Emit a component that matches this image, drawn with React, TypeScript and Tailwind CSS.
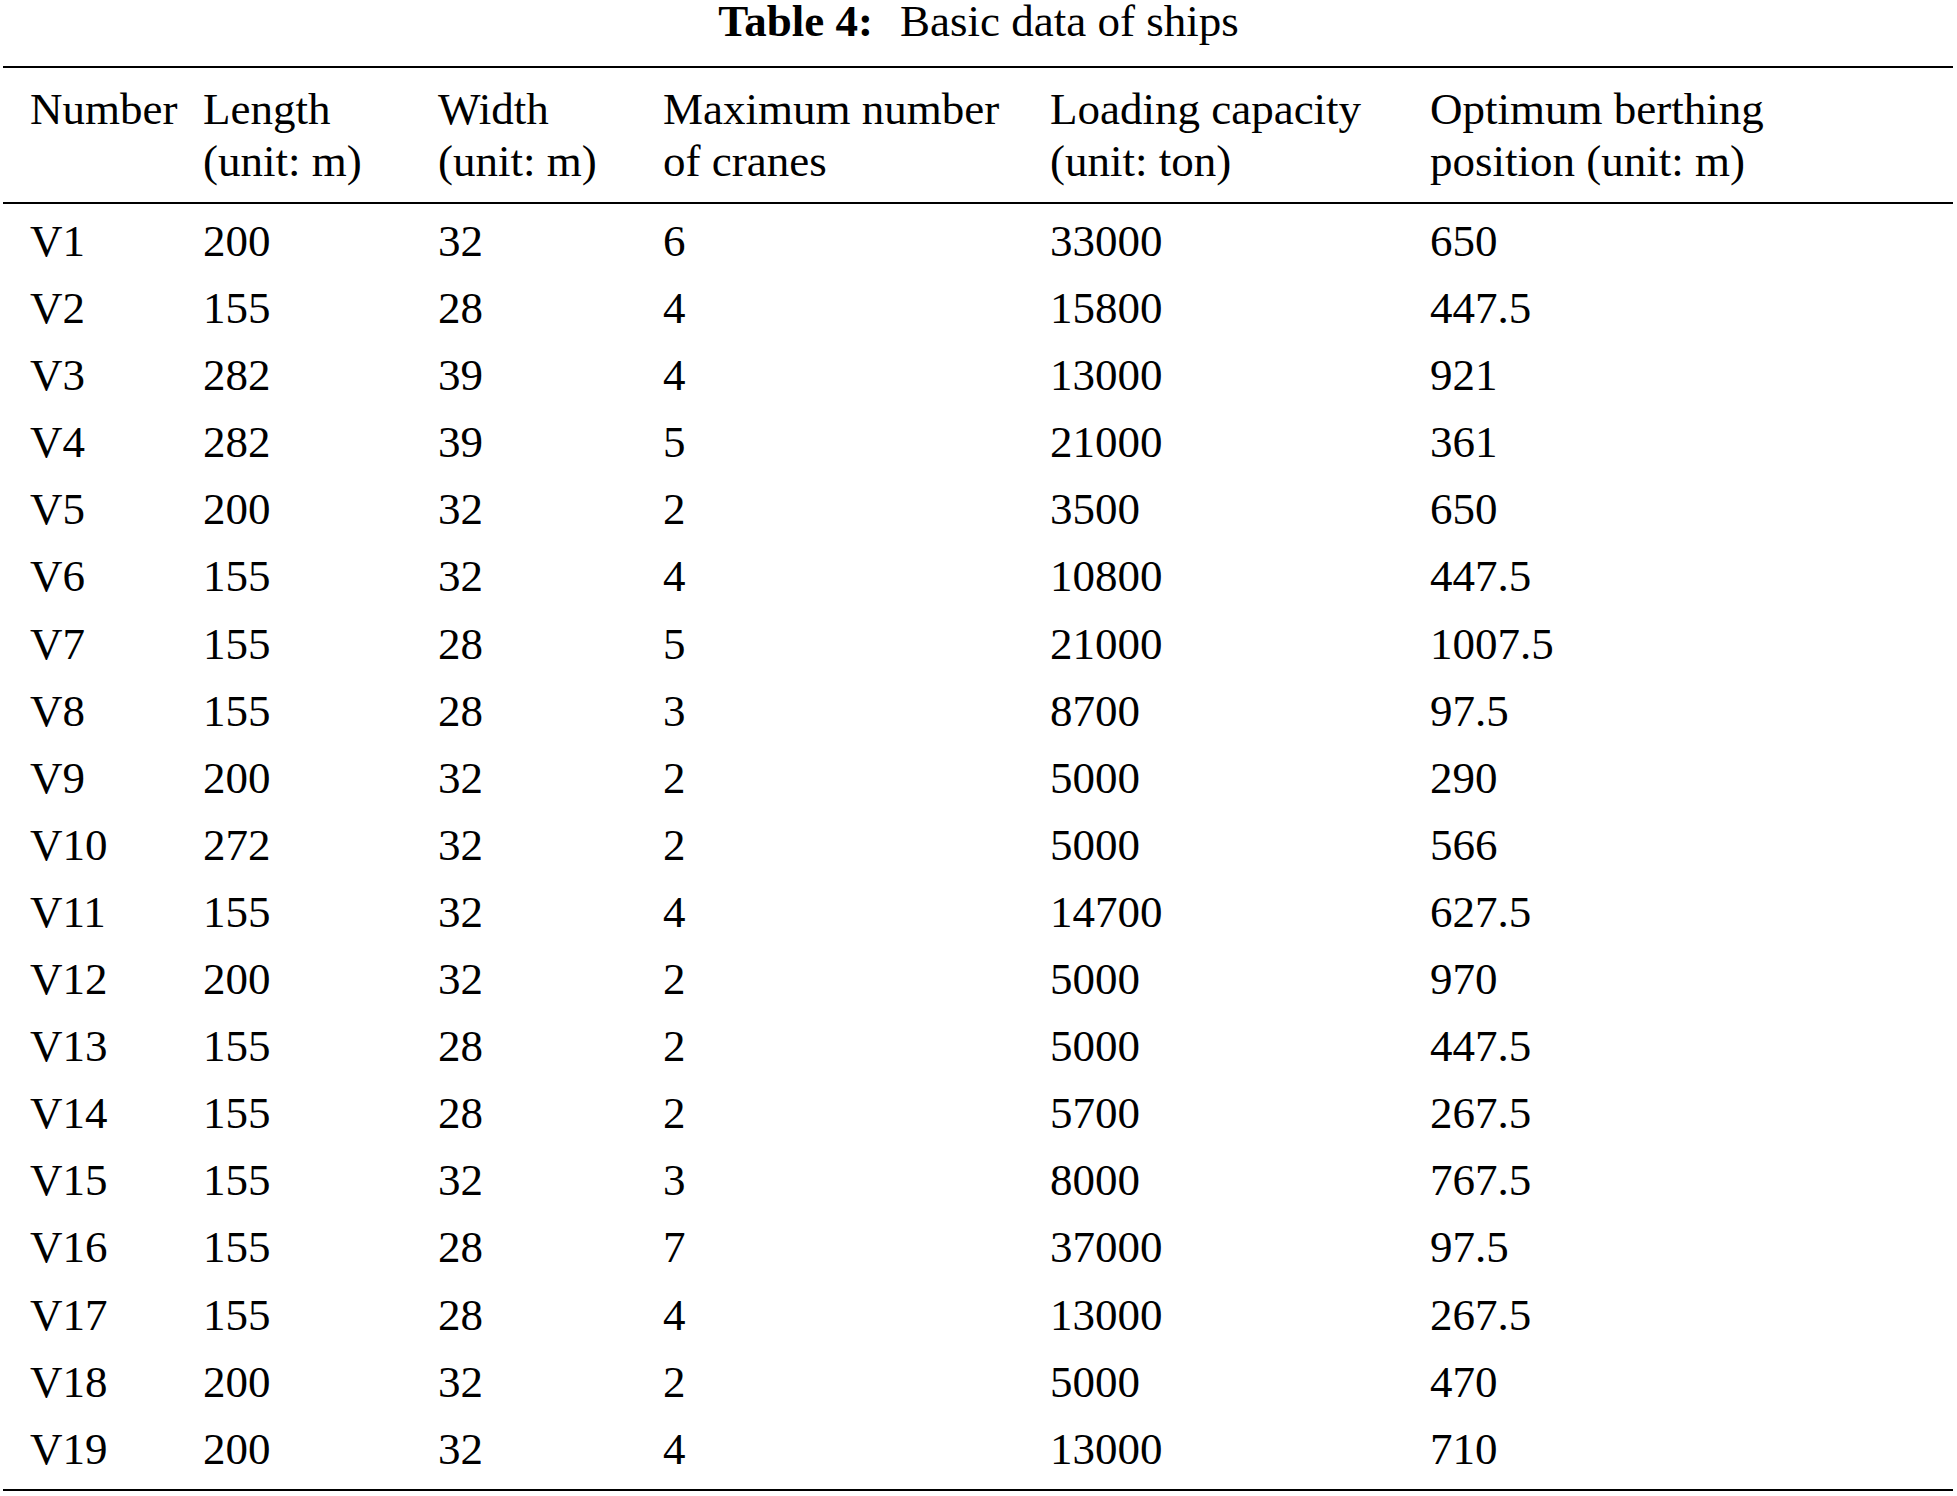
const header: [string, string][] = [
  ["Number", ""],
  ["Length", "(unit: m)"],
  ["Width", "(unit: m)"],
  ["Maximum number", "of cranes"],
  ["Loading capacity", "(unit: ton)"],
  ["Optimum berthing", "position (unit: m)"],
];

const rows: string[][] = [
  ["V1", "200", "32", "6", "33000", "650"],
  ["V2", "155", "28", "4", "15800", "447.5"],
  ["V3", "282", "39", "4", "13000", "921"],
  ["V4", "282", "39", "5", "21000", "361"],
  ["V5", "200", "32", "2", "3500", "650"],
  ["V6", "155", "32", "4", "10800", "447.5"],
  ["V7", "155", "28", "5", "21000", "1007.5"],
  ["V8", "155", "28", "3", "8700", "97.5"],
  ["V9", "200", "32", "2", "5000", "290"],
  ["V10", "272", "32", "2", "5000", "566"],
  ["V11", "155", "32", "4", "14700", "627.5"],
  ["V12", "200", "32", "2", "5000", "970"],
  ["V13", "155", "28", "2", "5000", "447.5"],
  ["V14", "155", "28", "2", "5700", "267.5"],
  ["V15", "155", "32", "3", "8000", "767.5"],
  ["V16", "155", "28", "7", "37000", "97.5"],
  ["V17", "155", "28", "4", "13000", "267.5"],
  ["V18", "200", "32", "2", "5000", "470"],
  ["V19", "200", "32", "4", "13000", "710"],
];

// shared column track so header and body line up
const cols =
  "grid grid-cols-[173px_235px_225px_387px_380px_1fr] pl-[27px] whitespace-nowrap";

export default function App() {
  return (
    <div className="min-h-[1496px] w-[1957px] bg-white text-black font-['Liberation_Serif',serif] text-[45px]">
      <div className="pt-[1px] text-center leading-[40px]">
        <span className="font-bold">Table 4:</span>
        <span className="ml-[27px]">Basic data of ships</span>
      </div>

      <div className="mx-[3px] mt-[25px] w-[1950px] border-t-2 border-b-2 border-black">
        <div className={`${cols} border-b-2 border-black pt-[15px] pb-[15px] leading-[52px]`}>
          {header.map(([a, b]) => (
            <div key={a}>
              <div>{a}</div>
              <div>{b || "\u00a0"}</div>
            </div>
          ))}
        </div>

        <div className="pt-[4px] pb-[6px] leading-[67.1px]">
          {rows.map((r) => (
            <div key={r[0]} className={cols}>
              {r.map((cell, i) => (
                <div key={i}>{cell}</div>
              ))}
            </div>
          ))}
        </div>
      </div>
    </div>
  );
}
